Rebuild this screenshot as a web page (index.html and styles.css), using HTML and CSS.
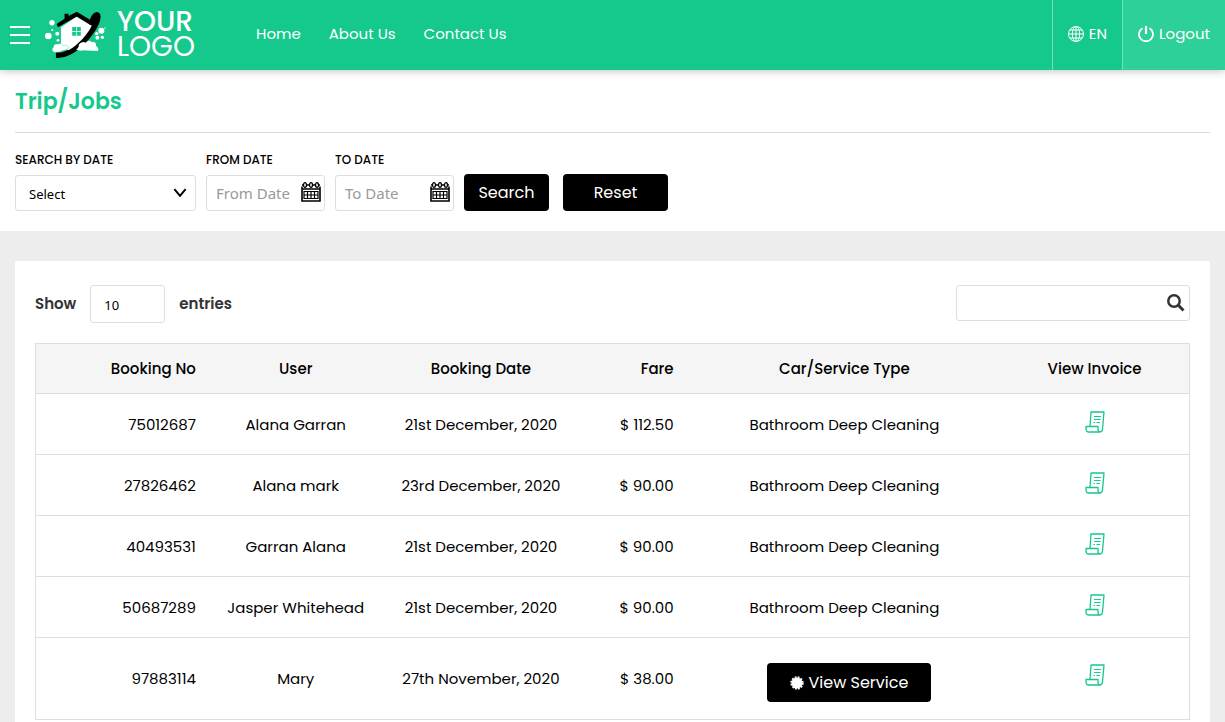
FILE: index.html
```html
<!DOCTYPE html>
<html lang="en">
<head>
<meta charset="utf-8">
<meta name="viewport" content="width=device-width, initial-scale=1">
<title>Trip/Jobs</title>
<link rel="stylesheet" href="styles.css">
</head>
<body>
<svg class="symbols" aria-hidden="true">
  <symbol id="calendar" viewBox="0 0 20 20">
    <path d="M1 4.500V19H19V4.500M1 3H2M6 3H8M12 3H14M18 3H19M1 7H19" fill="none" stroke="currentColor" stroke-width="1.600"/>
    <g fill="none" stroke="currentColor" stroke-width="1.300"><ellipse cx="4" cy="3" rx="1.500" ry="2.300"/><ellipse cx="10" cy="3" rx="1.500" ry="2.300"/><ellipse cx="16" cy="3" rx="1.500" ry="2.300"/></g>
    <path d="M3 9.500H17V16.500H3ZM3 13H17M6.500 9.500V16.500M10 9.500V16.500M13.500 9.500V16.500" fill="none" stroke="currentColor" stroke-width="1.200"/>
  </symbol>
  <symbol id="invoice" viewBox="0 0 20 22">
    <path d="M5 15.500L6 1H19L17.500 18Q17.200 21 15 21H4Q1 21 1 18V15.500H13V18Q13 21 15 21" fill="none" stroke="currentColor" stroke-width="1.300" stroke-linejoin="round"/>
    <path d="M9 5.500H16M9 8.500H15.500M8.500 11.500H10M11.500 11.500H15" fill="none" stroke="currentColor" stroke-width="1.200"/>
  </symbol>
</svg>

<header class="topbar">
  <button class="menu" type="button" aria-label="Menu"><span></span><span></span><span></span></button>
  <a class="logo" href="#">
    <svg class="logo-mark" viewBox="132 30 190 150" aria-hidden="true">
      <path d="M269 64Q275 40 290 36Q307 36 301 61C294 90 256 139 213 164Q190 176 168 174V157C207 168 270 96 269 64Z" fill="#000"/>
      <path d="M183 82L230 50L276 77C265 100 240 131 206 151L183 140Z" fill="#fff"/>
      <path d="M170 72L194 56V41H206V48L231 35L277 63L271 74L231 49L174 82Z" fill="#000"/>
      <path d="M217 81H229V93H217ZM231 81H243V93H231ZM217 95H229V107H217ZM231 95H243V107H231Z" fill="#15c88c"/>
      <path d="M160 156Q153 147 161 141Q162 129 174 133Q182 126 190 137Q199 132 208 143Q199 151 190 152Q177 159 160 156Z" fill="#fff" stroke="#15c88c" stroke-width="1"/>
      <path d="M229 149Q238 143 237 134Q245 122 258 128Q268 117 277 127Q290 124 289 138Q300 145 294 153Q264 152 253 151Q240 154 229 149Z" fill="#fff"/>
      <g fill="#fff"><circle cx="156" cy="68" r="8"/><circle cx="145" cy="108" r="10"/><circle cx="172" cy="101" r="6"/><circle cx="157" cy="90" r="3"/><circle cx="174" cy="121" r="4"/><circle cx="305" cy="92" r="9"/><circle cx="291" cy="101" r="5"/><circle cx="293" cy="113" r="6"/><circle cx="308" cy="112" r="5"/><circle cx="316" cy="84" r="2"/></g>
    </svg>
    <span class="logo-text"><b>YOUR</b><span>LOGO</span></span>
  </a>
  <nav class="nav">
    <a href="#">Home</a>
    <a href="#">About Us</a>
    <a href="#">Contact Us</a>
  </nav>
  <div class="account">
    <button class="lang" type="button">
      <svg class="icon16" viewBox="0 0 16 16" fill="none" stroke="currentColor" aria-hidden="true"><circle cx="8" cy="8" r="7.500"/><ellipse cx="8" cy="8" rx="3.700" ry="7.500"/><path d="M8 .5V15.500M.5 8H15.500M1.800 4H14.200M1.800 12H14.200"/></svg>
      EN
    </button>
    <a class="logout" href="#">
      <svg class="icon16" viewBox="0 0 16 16" fill="none" stroke="currentColor" stroke-width="1.800" aria-hidden="true"><path d="M4.500 2.200A7 7 0 1 0 11.500 2.200"/><path d="M8 0V8" stroke-width="2.200"/></svg>
      Logout
    </a>
  </div>
</header>

<section class="filters">
  <h1>Trip/Jobs</h1>
  <form class="filter-form">
    <div class="field field-select">
      <label for="range">SEARCH BY DATE</label>
      <div class="control">
        <select id="range"><option>Select</option></select>
        <svg class="chevron" viewBox="0 0 12 8" aria-hidden="true"><path d="M1 1L6 7L11 1" fill="none" stroke="#000" stroke-width="1.700"/></svg>
      </div>
    </div>
    <div class="field field-date">
      <label for="from">FROM DATE</label>
      <div class="control"><input id="from" type="text" placeholder="From Date"><svg class="cal"><use href="#calendar"/></svg></div>
    </div>
    <div class="field field-date">
      <label for="to">TO DATE</label>
      <div class="control"><input id="to" type="text" placeholder="To Date"><svg class="cal"><use href="#calendar"/></svg></div>
    </div>
    <div class="actions">
      <button class="btn search-btn" type="submit">Search</button>
      <button class="btn reset-btn" type="reset">Reset</button>
    </div>
  </form>
</section>

<main class="card">
  <div class="tools">
    <div class="length">
      <label for="entries">Show</label>
      <select id="entries"><option>10</option></select>
      <span>entries</span>
    </div>
    <div class="control table-search">
      <input type="search" aria-label="Search table">
      <svg class="lens" viewBox="0 0 18 18" aria-hidden="true"><circle cx="7" cy="7" r="5.700" fill="none" stroke="currentColor" stroke-width="2.500"/><path d="M11.300 11.300L16.500 16.500" stroke="currentColor" stroke-width="3"/></svg>
    </div>
  </div>
  <table class="trips">
    <colgroup><col class="c-no"><col class="c-user"><col class="c-date"><col class="c-fare"><col class="c-type"><col class="c-inv"></colgroup>
    <thead>
      <tr><th class="num">Booking No</th><th>User</th><th>Booking Date</th><th class="num">Fare</th><th>Car/Service Type</th><th>View Invoice</th></tr>
    </thead>
    <tbody>
      <tr><td class="num">75012687</td><td>Alana Garran</td><td>21st December, 2020</td><td class="num">$ 112.50</td><td>Bathroom Deep Cleaning</td><td><a class="invoice" href="#" aria-label="View invoice"><svg><use href="#invoice"/></svg></a></td></tr>
      <tr><td class="num">27826462</td><td>Alana mark</td><td>23rd December, 2020</td><td class="num">$ 90.00</td><td>Bathroom Deep Cleaning</td><td><a class="invoice" href="#" aria-label="View invoice"><svg><use href="#invoice"/></svg></a></td></tr>
      <tr><td class="num">40493531</td><td>Garran Alana</td><td>21st December, 2020</td><td class="num">$ 90.00</td><td>Bathroom Deep Cleaning</td><td><a class="invoice" href="#" aria-label="View invoice"><svg><use href="#invoice"/></svg></a></td></tr>
      <tr><td class="num">50687289</td><td>Jasper Whitehead</td><td>21st December, 2020</td><td class="num">$ 90.00</td><td>Bathroom Deep Cleaning</td><td><a class="invoice" href="#" aria-label="View invoice"><svg><use href="#invoice"/></svg></a></td></tr>
      <tr class="tall"><td class="num">97883114</td><td>Mary</td><td>27th November, 2020</td><td class="num">$ 38.00</td><td class="service"><button class="btn view-btn" type="button"><svg class="badge" viewBox="-7 -7 14 14" aria-hidden="true"><circle r="5.500" fill="currentColor"/><circle r="5.700" fill="none" stroke="currentColor" stroke-width="2" stroke-dasharray="1.800 1.185"/></svg>View Service</button></td><td><a class="invoice" href="#" aria-label="View invoice"><svg><use href="#invoice"/></svg></a></td></tr>
    </tbody>
  </table>
</main>
</body>
</html>
```
FILE: styles.css
```css
* { box-sizing: border-box; }

body {
  margin: 0;
  background: #ededed;
  color: #000;
  font: 15px/22px Poppins, Inter, sans-serif;
}

a { color: inherit; text-decoration: none; }
button { font: inherit; color: inherit; border: 0; background: none; padding: 0; cursor: pointer; }
.symbols { display: none; }

.topbar {
  position: relative;
  display: flex;
  align-items: center;
  height: 70px;
  background: #15c88c;
  color: #fff;
  box-shadow: 0 1px 8px rgba(0, 0, 0, .25);
}
.menu { display: flex; flex-direction: column; gap: 6px; width: 20px; margin-left: 10px; }
.menu span { height: 2px; background: #fff; }
.logo { display: flex; align-items: center; gap: 10px; margin-left: 14px; width: 182px; }
.logo-mark { width: 63px; height: 50px; }
.logo-text { display: flex; flex-direction: column; padding-bottom: 2px; font-size: 28px; line-height: 25px; font-weight: 400; }
.logo-text b { font-weight: 500; }
.nav { display: flex; gap: 28px; margin-left: 30px; padding-bottom: 2px; }
.account { display: flex; align-self: stretch; margin-left: auto; }
.lang, .logout {
  display: flex;
  align-items: center;
  gap: 5px;
  padding: 0 15px 2px;
  border-left: 1px solid #73dfba;
}
.logout { background: #2dd098; }
.icon16 { width: 16px; height: 16px; }

.filters { background: #fff; padding: 17px 15px 20px; }
h1 {
  margin: 0;
  padding-bottom: 15px;
  border-bottom: 1px solid #d9d9d9;
  color: #15c88c;
  font-size: 22px;
  line-height: 30px;
  font-weight: 600;
}
.filter-form { display: flex; align-items: flex-end; gap: 10px; padding-top: 18px; }
.field label { display: block; margin-bottom: 6px; font-size: 12px; line-height: 18px; font-weight: 500; }
.field-select { width: 181px; }
.field-date { width: 119px; }
.control { position: relative; }
select, input {
  display: block;
  appearance: none;
  width: 100%;
  height: 36px;
  padding: 0 9px;
  border: 1px solid #dedede;
  border-radius: 3px;
  background: #fff;
  color: #000;
  font: 15px "Noto Sans", sans-serif;
}
select { padding: 2px 13px 0; font-size: 13px; }
input::placeholder { color: #999; }
.chevron { position: absolute; right: 9px; top: 13px; width: 14px; height: 9px; }
.cal { position: absolute; right: 4px; top: 7px; width: 20px; height: 20px; }
.actions { display: flex; gap: 14px; }
.btn { height: 37px; border-radius: 4px; background: #000; color: #fff; font-size: 16px; }
.search-btn { width: 85px; }
.reset-btn { width: 105px; }

.card { margin: 30px 15px 0; padding: 24px 20px; background: #fff; }
.tools { display: flex; justify-content: space-between; margin-bottom: 20px; }
.length { display: flex; align-items: center; gap: 14px; color: #333; font-weight: 600; }
.length select { width: 75px; height: 38px; }
.table-search { width: 234px; color: #333; }
.lens { position: absolute; right: 5px; top: 9px; width: 18px; height: 18px; }

.trips {
  width: 100%;
  table-layout: fixed;
  border-collapse: collapse;
  border: 1px solid #dedede;
}
.c-no { width: 15.2%; }
.c-user { width: 14.7%; }
.c-date { width: 17.4%; }
.c-fare { width: 9.3%; }
.c-type { width: 27%; }
.c-inv { width: 16.4%; }
th, td { padding: 0 15px; text-align: center; border-bottom: 1px solid #dedede; white-space: nowrap; }
th { height: 50px; background: #f5f5f5; font-weight: 500; }
td { height: 61px; padding-top: 2px; }
.tall td { height: 82px; padding-top: 0; }
.tall .service { padding: 8px 10px 0 20px; }
.num { text-align: right; }
.invoice { display: inline-block; padding-bottom: 7px; color: #15c88c; vertical-align: middle; }
.invoice svg { display: block; width: 20px; height: 22px; }
.view-btn { display: inline-flex; align-items: center; justify-content: center; gap: 4px; width: 164px; height: 39px; }
.badge { width: 14px; height: 14px; }
```
